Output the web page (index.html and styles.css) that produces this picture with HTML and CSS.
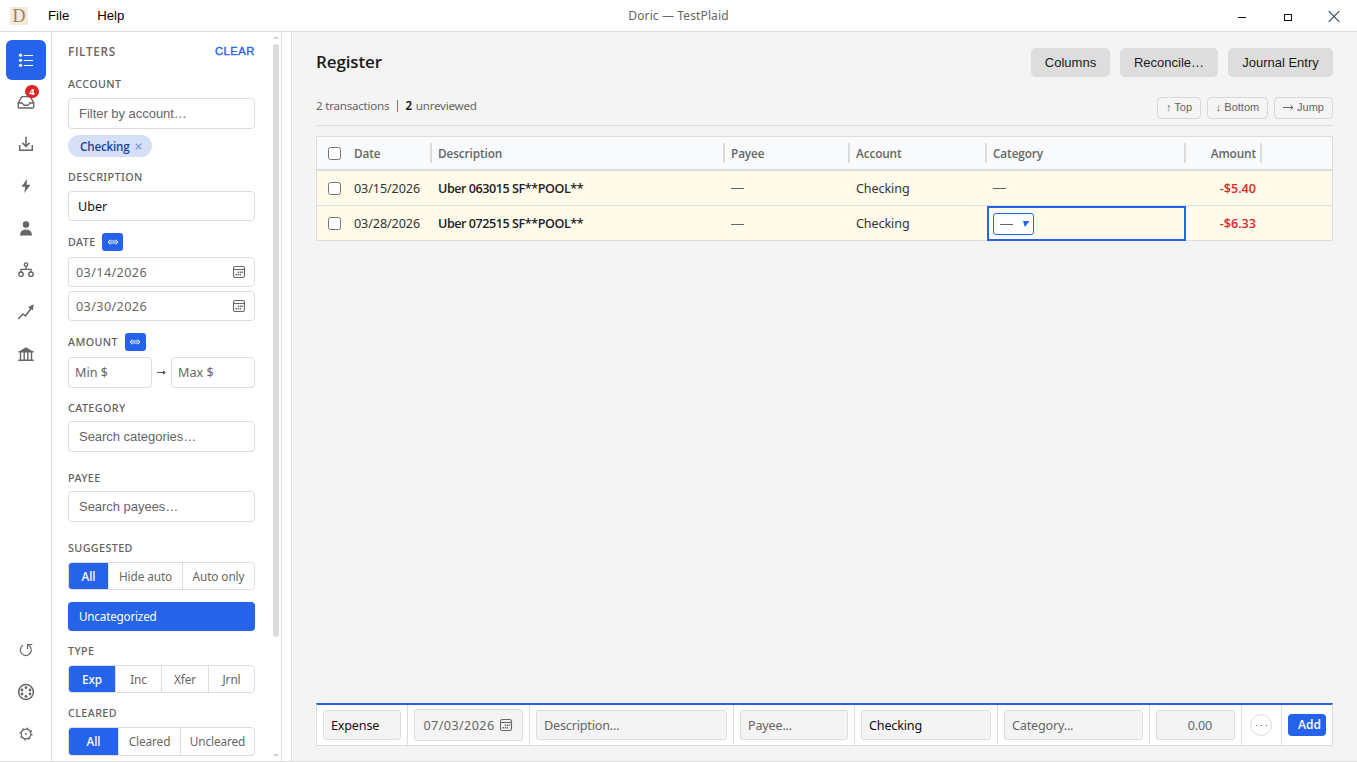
FILE: index.html
```
<!DOCTYPE html>
<html lang="en">
<head>
<meta charset="utf-8">
<title>Doric — TestPlaid</title>
<link rel="stylesheet" href="styles.css">
</head>
<body>
<svg width="0" height="0" class="defs">
  <symbol id="cal" viewBox="0 0 14 14"><rect x="1.500" y="1.500" width="11" height="11" rx="1.800" fill="none" stroke="#666" stroke-width="1.100"/><path d="M1.500 4.500h11" stroke="#666" stroke-width="1.100"/><path d="M5.800 7.200h1.500M8 7.200h1.500M10.200 7.200h1M3.500 9.700h1.500M5.800 9.700h1.500M8 9.700h1" stroke="#666" stroke-width="1.400"/></symbol>
  <symbol id="swap" viewBox="0 0 12 8"><path d="M2.200 3h7.600M2.200 5h7.600M3.400 1.700L1 4l2.400 2.300M8.600 1.700L11 4 8.600 6.300" fill="none" stroke="#fff" stroke-width=".9"/></symbol>
</svg>
<div class="app">
  <header class="titlebar">
    <div class="logo">D</div>
    <nav class="menu"><span>File</span><span>Help</span></nav>
    <div class="title">Doric — TestPlaid</div>
    <div class="winctl">
      <svg width="12" height="12"><path d="M2 7.500h8" stroke="#111" stroke-width="1"/></svg>
      <svg width="12" height="12"><rect x="2.500" y="4.500" width="7" height="6" fill="none" stroke="#111"/></svg>
      <svg width="12" height="12"><path d="M.7 1.200l10.600 10.600M11.300 1.200L.7 11.800" stroke="#345" stroke-width="1.100"/></svg>
    </div>
  </header>
  <div class="body">
    <nav class="rail">
      <div class="rbtn active"><svg width="16" height="16" viewBox="0 0 16 16"><g fill="#fff"><circle cx="2.500" cy="3.200" r="1.600"/><circle cx="2.500" cy="8.300" r="1.600"/><circle cx="2.500" cy="13.300" r="1.600"/></g><path d="M5.800 3.500h9.200M5.800 8.500h9.200M5.800 13.500h9.200" stroke="#fff" stroke-width="1.100"/></svg></div>
      <div class="rbtn"><svg width="18" height="16" viewBox="0 0 18 16"><path d="M1.200 9L4.300 3.300q.4-.7 1.200-.7h7q.8 0 1.200.7L16.800 9v3.800q0 1.200-1.200 1.200H2.400q-1.200 0-1.200-1.200zM1.200 9h4.200q.4 2.300 2 2.300h3.200q1.600 0 2-2.300h4.200" fill="none" stroke="#666" stroke-width="1.400"/></svg><b class="badge">4</b></div>
      <div class="rbtn"><svg width="16" height="16" viewBox="0 0 16 16"><path d="M1.700 9v5.300h12.600V9M8 .8v9.400M4.300 6.700L8 10.400l3.700-3.700" fill="none" stroke="#666" stroke-width="1.500"/></svg></div>
      <div class="rbtn"><svg width="12" height="16" viewBox="0 0 12 16"><path d="M7 1L1.500 8.700h3.700L4.300 15 10.500 6.700H6.600z" fill="#666"/></svg></div>
      <div class="rbtn"><svg width="16" height="16" viewBox="0 0 16 16"><circle cx="8" cy="4.500" r="3.200" fill="#666"/><path d="M2 15.500q0-6 6-6t6 6z" fill="#666"/></svg></div>
      <div class="rbtn"><svg width="16" height="16" viewBox="0 0 16 16"><g fill="none" stroke="#666" stroke-width="1.400"><circle cx="8" cy="2.600" r="1.700"/><circle cx="3" cy="12.200" r="2.200"/><circle cx="13" cy="12.200" r="2.200"/><path d="M8 4.300v3M3 10V7.400h10V10"/></g></svg></div>
      <div class="rbtn"><svg width="16" height="16" viewBox="0 0 16 16"><path d="M.4 15L5 10l2.500 2 5.800-8" fill="none" stroke="#666" stroke-width="1.500"/><path d="M10 3.200L15.800.3 14.800 6.500z" fill="#666"/></svg></div>
      <div class="rbtn"><svg width="16" height="16" viewBox="0 0 16 16"><path d="M.5 5.800L8 1.300l7.500 4.500z" fill="#666"/><path d="M2.500 6v8M6.200 6v8M9.800 6v8M13.500 6v8M.3 14.200h15.400M.5 5.800h15" stroke="#666" stroke-width="1.400"/></svg></div>
      <div class="spacer"></div>
      <div class="rbtn"><svg width="14" height="14" viewBox="0 0 14 14"><path d="M4 2.300A5.500 5.500 0 1 0 11.200 3.700Q10 2 8.500 1.500M8.500 6V1.500h4.800" fill="none" stroke="#666" stroke-width="1.200"/></svg></div>
      <div class="rbtn"><svg width="18" height="18" viewBox="0 0 18 18"><circle cx="9" cy="9" r="7.400" fill="none" stroke="#666" stroke-width="1.500"/><g fill="#666"><circle cx="9" cy="4.700" r="1.400"/><circle cx="9" cy="13.300" r="1.400"/><circle cx="5" cy="7" r="1.400"/><circle cx="5" cy="11" r="1.400"/><circle cx="13" cy="7" r="1.400"/><circle cx="13" cy="11" r="1.400"/></g></svg></div>
      <div class="rbtn"><svg width="14" height="14" viewBox="0 0 14 14"><circle cx="7" cy="7" r="4.900" fill="none" stroke="#666" stroke-width="1.200"/><circle cx="7" cy="7" r="5.900" fill="none" stroke="#666" stroke-width="1.300" stroke-dasharray="1.600 3.034"/><circle cx="7" cy="7" r=".9" fill="#666"/></svg></div>
    </nav>
    <aside class="filters">
      <div class="fhead"><span>FILTERS</span><span class="clear">CLEAR</span></div>
      <div class="label acc">ACCOUNT</div>
      <div class="input ar">Filter by account…</div>
      <div class="chip"><span>Checking</span><svg width="7" height="7"><path d="M.7 .7l5.600 5.600M6.300 .7L.7 6.300" stroke="#6f92e6" stroke-width="1.100"/></svg></div>
      <div class="label">DESCRIPTION</div>
      <div class="input short dark">Uber</div>
      <div class="label tall">DATE<span class="toggle"><svg width="12" height="8"><use href="#swap"/></svg></span></div>
      <div class="input short date">03/14/2026<svg width="14" height="14"><use href="#cal"/></svg></div>
      <div class="input short date second">03/30/2026<svg width="14" height="14"><use href="#cal"/></svg></div>
      <div class="label tall amt">AMOUNT<span class="toggle"><svg width="12" height="8"><use href="#swap"/></svg></span></div>
      <div class="range"><div class="input">Min $</div><svg width="9" height="7"><path d="M0 3.500h8" stroke="#555"/><path d="M6 1.300l3 2.200-3 2.200z" fill="#555"/></svg><div class="input">Max $</div></div>
      <div class="label tight">CATEGORY</div>
      <div class="input ar">Search categories…</div>
      <div class="label tight wide">PAYEE</div>
      <div class="input ar">Search payees…</div>
      <div class="label wide">SUGGESTED</div>
      <div class="seg s1"><b>All</b><span>Hide auto</span><span>Auto only</span></div>
      <div class="uncat">Uncategorized</div>
      <div class="label">TYPE</div>
      <div class="seg s2"><b>Exp</b><span>Inc</span><span>Xfer</span><span>Jrnl</span></div>
      <div class="label">CLEARED</div>
      <div class="seg s3"><b>All</b><span>Cleared</span><span>Uncleared</span></div>
      <div class="scroll"><i class="up"></i><i class="thumb"></i><i class="down"></i></div>
    </aside>
    <div class="gutter"></div>
    <main class="main">
      <div class="mhead"><h1>Register</h1><div class="actions"><button class="w1">Columns</button><button class="w2">Reconcile…</button><button class="w3">Journal Entry</button></div></div>
      <div class="summary"><div class="counts"><span>2 transactions</span><i></i><strong>2</strong><span>unreviewed</span></div><div class="jumps"><span class="j1">↑ Top</span><span class="j2">↓ Bottom</span><span class="j3"><svg width="11" height="7"><path d="M0 3.500h10M7.500 1.500l2.500 2-2.500 2" fill="none" stroke="#666"/></svg>Jump</span></div></div>
      <section class="table">
        <div class="row head"><div class="ck"><input type="checkbox"></div><div>Date</div><div>Description</div><div>Payee</div><div>Account</div><div>Category</div><div class="num">Amount</div><div class="last"></div></div>
        <div class="row"><div class="ck"><input type="checkbox"></div><div class="dt">03/15/2026</div><div class="desc">Uber 063015 SF**POOL**</div><div class="dash"><i></i></div><div>Checking</div><div class="dash"><i></i></div><div class="num">-$5.40</div><div></div></div>
        <div class="row"><div class="ck"><input type="checkbox"></div><div class="dt">03/28/2026</div><div class="desc">Uber 072515 SF**POOL**</div><div class="dash"><i></i></div><div>Checking</div><div class="focus"><span class="pick"><i></i><svg width="6" height="6"><path d="M0 0h6.500L1.800 6z" fill="#2563eb"/></svg></span></div><div class="num">-$6.33</div><div></div></div>
      </section>
      <div class="spacer"></div>
      <section class="entry">
        <div><span class="fld dark">Expense</span></div>
        <div><span class="fld dfld">07/03/2026<svg width="14" height="14"><use href="#cal"/></svg></span></div>
        <div><span class="fld">Description...</span></div>
        <div><span class="fld">Payee...</span></div>
        <div><span class="fld dark">Checking</span></div>
        <div><span class="fld">Category...</span></div>
        <div><span class="fld zero">0.00</span></div>
        <div class="mcell"><span class="more"><i></i><i></i><i></i></span></div>
        <div><span class="add">Add</span></div>
      </section>
    </main>
  </div>
</div>
</body>
</html>
```
FILE: styles.css
```
* { box-sizing: border-box; }
body { margin: 0; font: 12.6px "Noto Sans", "Open Sans", sans-serif; color: #1a1a1a; background: #fff; }
svg { display: block; flex: none; }
.defs { position: absolute; }
.app { width: 1357px; height: 762px; display: flex; flex-direction: column; overflow: hidden; border-bottom: 1px solid #ddd; }
.titlebar { position: relative; height: 32px; flex: none; border-bottom: 1px solid #ddd; display: flex; align-items: center; padding: 0 17px 0 10px; }
.logo { width: 18px; height: 18px; background: #f4ead9; color: #a87b62; font: 18px/18px "Liberation Serif", serif; text-align: center; }
.menu { display: flex; gap: 28px; margin-left: 20px; font: 13.2px "Liberation Sans", sans-serif; color: #000; }
.title { position: absolute; left: 0; right: 0; text-align: center; font-size: 12px; color: #666; letter-spacing: .12px; }
.winctl { margin-left: auto; display: flex; gap: 34px; }
.body { flex: 1; display: flex; min-height: 0; }
.rail { width: 52px; border-right: 1px solid #ddd; padding: 8px 0 7px 6px; display: flex; flex-direction: column; gap: 2px; flex: none; }
.rbtn { width: 40px; height: 40px; flex: none; border-radius: 6px; display: flex; align-items: center; justify-content: center; position: relative; }
.rbtn.active { background: #2563eb; }
.badge { position: absolute; left: 19px; top: 3px; width: 14px; height: 13px; border-radius: 7px; background: #dc2626; color: #fff; font: 700 9.500px/13px "Open Sans", sans-serif; text-align: center; }
.spacer { flex: 1; }
.filters { position: relative; width: 230px; flex: none; border-right: 1px solid #ddd; padding: 9px 26px 0 16px; overflow: hidden; }
.fhead { display: flex; justify-content: space-between; align-items: center; height: 20px; font: 600 11.7px "Open Sans", sans-serif; color: #666; letter-spacing: .65px; }
.clear { font: 11.2px "Liberation Sans", sans-serif; color: #2563eb; letter-spacing: .55px; -webkit-text-stroke: .4px #2563eb; }
.label { height: 16px; margin: 12px 0 6px; font-size: 10.7px; font-weight: 500; line-height: 16px; letter-spacing: .43px; color: #606060; display: flex; align-items: center; }
.label.acc { margin-top: 15px; }
.label.tall { height: 18px; }
.label.tight { margin-bottom: 5px; }
.label.wide { margin-top: 18px; }
.toggle { width: 21px; height: 18px; border-radius: 3px; background: #2563eb; margin-left: 6.500px; display: flex; align-items: center; justify-content: center; }
.amt .toggle { margin-left: 7px; }
.input { height: 31px; border: 1px solid #ddd; border-radius: 4px; background: #fff; display: flex; align-items: center; padding: 0 10px; color: #666; }
.input.ar { font: 13px "Liberation Sans", sans-serif; letter-spacing: -.03px; }
.input.short { height: 30px; padding: 0 9px; }
.input.dark, .fld.dark { color: #111; }
.input.date { padding: 0 8px 0 7px; justify-content: space-between; letter-spacing: .4px; }
.input.second { margin-top: 4px; }
.chip { width: 84px; height: 22px; margin-top: 6px; border-radius: 11px; background: #d5dff6; display: flex; align-items: center; gap: 5px; padding-left: 12px; font: 600 11.6px "Open Sans", sans-serif; color: #1746a0; letter-spacing: -.15px; }
.chip span { width: 50px; }
.range { display: flex; align-items: center; justify-content: space-between; }
.range .input { width: 84px; padding: 0 6px; }
.seg { height: 28px; border: 1px solid #ddd; border-radius: 4px; display: grid; overflow: hidden; font-size: 11.8px; letter-spacing: -.1px; color: #666; text-align: center; line-height: 26px; }
.seg > * { border-left: 1px solid #ddd; }
.seg b { background: #2563eb; color: #fff; border: 0; font-weight: 500; }
.s1 { grid-template-columns: 39px 74px 1fr; }
.s2 { grid-template-columns: 46px 46px 47px 1fr; }
.s3 { grid-template-columns: 49px 62px 1fr; height: 29px; line-height: 27px; }
.uncat { height: 29px; margin-top: 12px; border-radius: 4px; background: #2563eb; color: #fff; font-size: 11.7px; line-height: 29px; padding-left: 11px; letter-spacing: -.2px; }
.scroll { position: absolute; right: 0; top: 0; bottom: 0; width: 8px; display: flex; flex-direction: column; align-items: flex-start; padding: 4px 0; }
.scroll i { display: block; }
.up { border: 3px solid transparent; border-top: 0; border-bottom: 3px solid #d0d0d0; }
.thumb { width: 6px; height: 593px; margin-top: 5px; border-radius: 3px; background: #dbdbdb; }
.down { border: 3px solid transparent; border-bottom: 0; border-top: 3px solid #d0d0d0; margin-top: auto; }
.gutter { width: 10px; flex: none; border-right: 1px solid #ddd; }
.main { flex: 1; min-width: 0; background: #f4f4f4; padding: 16px 24px 15px; display: flex; flex-direction: column; }
.mhead { height: 29px; display: flex; justify-content: space-between; align-items: center; }
h1 { margin: 0; font: 600 17px/27px "Open Sans", sans-serif; letter-spacing: -.12px; padding-bottom: 2px; }
.actions { display: flex; gap: 10px; }
button { height: 29px; border: 0; border-radius: 5px; background: #ddd; padding: 0; font: 13px "Liberation Sans", sans-serif; color: #1a1a1a; }
.w1 { width: 79px; } .w2 { width: 98px; } .w3 { width: 105px; }
.summary { height: 49px; border-bottom: 1px solid #ddd; display: flex; justify-content: space-between; padding-top: 20px; margin-bottom: 10px; }
.counts { display: flex; align-items: center; height: 17px; font-size: 11.6px; letter-spacing: -.23px; color: #666; }
.counts i { width: 1px; height: 12px; background: #3c9a68; margin: 0 7px 0 8px; }
.counts strong { font-weight: 600; color: #111; margin-right: 4px; }
.jumps { display: flex; gap: 6px; font: 11px "Liberation Sans", sans-serif; color: #666; }
.jumps span { height: 22px; border: 1px solid #d8d8d8; border-radius: 4px; display: flex; gap: 3px; align-items: center; justify-content: center; padding-bottom: 2px; }
.j1 { width: 44px; } .j2 { width: 61px; } .j3 { width: 59px; }
.table { border: 1px solid #ddd; }
.row { display: grid; grid-template-columns: 31px 84px 293px 125px 137px 199px 76px 1fr; height: 35px; background: #fffbeb; border-bottom: 1px solid #ddd; color: #333; }
.row:last-child { height: 34px; border: 0; }
.row > div { padding-left: 6px; display: flex; align-items: center; white-space: nowrap; letter-spacing: -.1px; }
.row.head { height: 34px; border-bottom: 2px solid #ddd; background: #f9fafc; color: #666; align-items: center; }
.row.head > div { height: 20px; border-right: 2px solid #ddd; font: 600 11.8px "Open Sans", sans-serif; letter-spacing: -.12px; }
.row.head .ck, .row.head .last { border: 0; }
.row > .ck { padding-left: 11px; }
.ck input { margin: 0; width: 13px; height: 13px; }
.row > .num { justify-content: flex-end; padding: 0 6px 0 0; }
.row.head > .num { padding-right: 4px; }
.row:not(.head) .num { color: #dc2626; font: 600 12.6px "Open Sans", sans-serif; letter-spacing: 0; }
.row > .desc { font: 600 12.6px "Open Sans", sans-serif; letter-spacing: -.46px; color: #222; }
.dash i, .pick i { width: 13px; height: 1px; margin-top: 1px; background: #666; }
.row > .focus { border: 2px solid #2563eb; height: 35px; padding-left: 4px; }
.pick { width: 41px; height: 22px; border: 1px solid #2563eb; border-radius: 3px; background: #fff; display: flex; align-items: center; padding: 0 4px 0 6px; justify-content: space-between; }
.entry { height: 43px; border: 1px solid #ddd; border-top: 2px solid #2563eb; background: #fff; display: grid; grid-template-columns: 90px 122px 204px 121px 143px 152px 92px 40px 1fr; }
.entry > div { border-left: 1px solid #ddd; padding: 0 6px; display: flex; align-items: center; justify-content: center; }
.entry > div:first-child { border: 0; }
.entry > .mcell { padding: 0 9px 0 8px; }
.fld { flex: 1; height: 30px; border: 1px solid #ddd; border-radius: 3px; background: #f4f4f4; color: #666; display: flex; align-items: center; padding: 0 7px; letter-spacing: -.18px; }
.dfld { height: 32px; padding: 0 9px 0 8.500px; justify-content: space-between; letter-spacing: .4px; }
.zero { justify-content: flex-end; padding-right: 22px; }
.more { width: 22px; height: 22px; flex: none; border: 1px solid #ddd; border-radius: 11px; display: flex; align-items: center; justify-content: center; gap: 4px; }
.more i { width: 1px; height: 1px; background: #666; }
.add { width: 38px; height: 22px; background: #2563eb; border-radius: 4px; color: #fff; font: 600 12px/22px "Open Sans", sans-serif; padding-left: 10px; }
```
